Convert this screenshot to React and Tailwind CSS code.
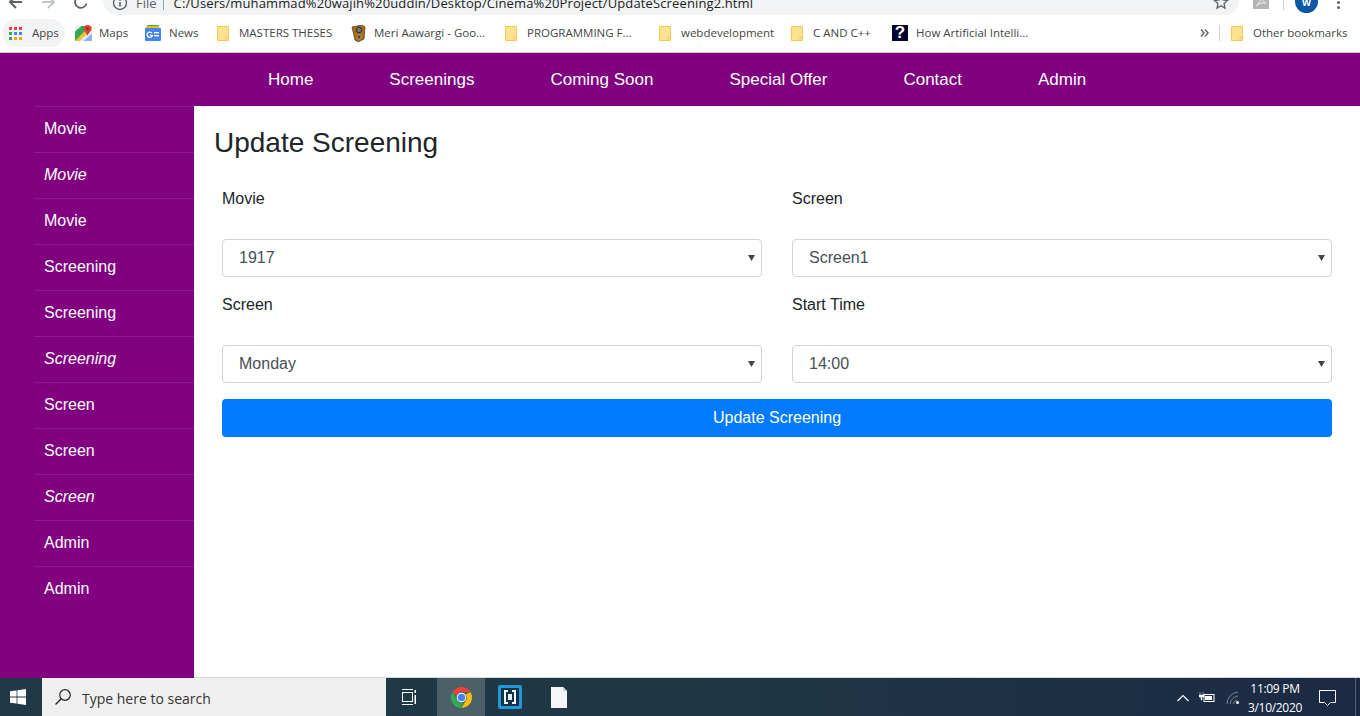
import React from "react";

const sans = "[font-family:'Liberation_Sans',Arial,sans-serif]";
const ui = "[font-family:'Open_Sans','Noto_Sans',sans-serif]";

function Folder() {
  return (
    <svg width="12" height="15" viewBox="0 0 12 15" className="shrink-0">
      <path d="M.5.5h11v14H.5z" fill="#fee28f" stroke="#f0cb5c" strokeWidth="1" />
      <path d="M9 14.5v-3h2.5" fill="none" stroke="#f0cb5c" strokeWidth="1" />
    </svg>
  );
}

function Bm({ icon, label, w }) {
  return (
    <div className={`flex items-center shrink-0 ${w}`}>
      {icon}
      <span className={`${ui} text-[11.5px] text-[#444] whitespace-nowrap`}>{label}</span>
    </div>
  );
}

function AppsIcon() {
  const c = ["#ea4335", "#ea4335", "#ea4335", "#34a853", "#4285f4", "#4285f4", "#34a853", "#fba704", "#fba704"];
  return (
    <div className="grid grid-cols-3 gap-[2px] w-[13px] h-[13px] shrink-0">
      {c.map((x, i) => (
        <span key={i} className="w-[3px] h-[3px]" style={{ background: x }} />
      ))}
    </div>
  );
}

function MapsIcon() {
  return (
    <svg width="17" height="17" viewBox="0 0 16 16" className="shrink-0">
      <path d="M0 1h16v14H0z" fill="#34a853" />
      <path d="M0 15 14 1h2v3L4 15z" fill="#fbc02d" />
      <path d="M4 15 16 4v11z" fill="#e8eaed" />
      <path d="M8 15l8-7v7z" fill="#8ab4f8" />
      <path d="M0 1h6L0 6z" fill="#e8f0fe" />
      <path d="M11.8 0a3.6 3.6 0 0 1 3.6 3.6c0 2.3-2.4 3.6-3.6 6.6-1.2-3-3.6-4.3-3.6-6.6A3.6 3.6 0 0 1 11.8 0z" fill="#db4437" />
      <circle cx="11.8" cy="3.6" r="1.2" fill="#8c2319" />
    </svg>
  );
}

function NewsIcon() {
  return (
    <svg width="16" height="16" viewBox="0 0 16 16" className="shrink-0">
      <rect x="2" y="0" width="12" height="6" rx="1" fill="#34a853" />
      <rect x="1" y="1" width="13" height="5" fill="#fbbc04" />
      <rect x="0" y="3" width="16" height="13" rx="1" fill="#4285f4" />
      <rect x="9" y="7" width="5" height="1.4" fill="#fff" />
      <rect x="9" y="10" width="5" height="1.4" fill="#fff" />
      <path d="M7 8.2A2.7 2.7 0 1 0 7.4 10.4H5" fill="none" stroke="#fff" strokeWidth="1.3" />
    </svg>
  );
}

function SpeakerIcon() {
  return (
    <svg width="15" height="17" viewBox="0 0 15 17" className="shrink-0">
      <path d="M1 2 11 0l3 2-1 12-6 3-3-2z" fill="#a8701c" stroke="#4a3010" strokeWidth="0.7" />
      <circle cx="8" cy="5" r="2.8" fill="#777" stroke="#222" strokeWidth="0.9" />
      <circle cx="8" cy="12" r="2" fill="#444" stroke="#d2a860" strokeWidth="0.7" />
    </svg>
  );
}

function QIcon() {
  return (
    <div className={`${sans} w-[16px] h-[16px] bg-[#04042c] shrink-0 overflow-hidden text-white text-[17px] font-bold leading-[15px] text-center`}>
      ?
    </div>
  );
}

function TopBar() {
  return (
    <div className="h-[15px] flex items-end bg-white overflow-hidden shrink-0">
      <div className="relative w-full h-[15px] flex items-end">
        <svg width="16" height="16" viewBox="0 0 16 16" className="ml-[8px] mb-[5px] shrink-0">
          <path d="M14 8H3M8 2 2 8l6 6" fill="none" stroke="#5f6368" strokeWidth="2" />
        </svg>
        <svg width="16" height="16" viewBox="0 0 16 16" className="ml-[16px] mb-[5px] shrink-0">
          <path d="M2 8h11M8 2l6 6-6 6" fill="none" stroke="#c4c7ca" strokeWidth="2" />
        </svg>
        <svg width="16" height="16" viewBox="0 0 16 16" className="ml-[17px] mb-[5px] shrink-0">
          <path d="M13.5 9.5A5.8 5.8 0 1 1 12 4" fill="none" stroke="#5f6368" strokeWidth="1.8" />
          <path d="M14.5 1v5h-5z" fill="#5f6368" />
        </svg>
        <div className="ml-[14px] w-[1136px] h-[30px] rounded-[15px] bg-[#f1f3f4] flex items-end pl-[9px] shrink-0">
          <div className="flex items-center h-[15px] relative">
            <svg width="16" height="16" viewBox="0 0 16 16" className="shrink-0 -mt-[10px]">
              <circle cx="8" cy="8" r="6.5" fill="none" stroke="#5f6368" strokeWidth="1.4" />
              <rect x="7.2" y="7" width="1.6" height="4.5" fill="#5f6368" />
              <rect x="7.2" y="4.2" width="1.6" height="1.6" fill="#5f6368" />
            </svg>
            <span className={`${ui} text-[13px] text-[#5f6368] ml-[8px] -mt-[10px] leading-[16px]`}>File</span>
            <span className="w-px h-[14px] bg-[#9aa0a6] ml-[6px] -mt-[10px]" />
            <span className={`${ui} text-[13px] text-[#202124] ml-[10px] -mt-[10px] leading-[16px] whitespace-nowrap tracking-[0.125px]`}>
              C:/Users/muhammad%20wajih%20uddin/Desktop/Cinema%20Project/UpdateScreening2.html
            </span>
          </div>
        </div>
        <svg width="16" height="16" viewBox="0 0 16 16" className="absolute left-[1213px] -top-[6px]">
          <path d="m8 1.8 1.9 4.2 4.6.5-3.4 3.1.9 4.5-4-2.3-4 2.3.9-4.5-3.4-3.1 4.6-.5z" fill="none" stroke="#5f6368" strokeWidth="1.3" />
        </svg>
        <svg width="16" height="16" viewBox="0 0 16 16" className="absolute left-[1253px] -top-[7px]">
          <rect width="16" height="16" fill="#b5b5b5" />
          <path d="M3 13c3-2 5-6 5-10 0 4 2 6 5 7-4-.5-7 .5-10 3z" fill="none" stroke="#eee" strokeWidth="1" />
        </svg>
        <span className="absolute left-[1283px] top-0 w-px h-[10px] bg-[#d0d0d0]" />
        <div className="absolute left-[1295px] -top-[10px] w-[23px] h-[23px] rounded-full bg-[#0b57a4] text-white text-[11px] font-bold leading-[24px] text-center">
          w
        </div>
        <div className="absolute left-[1337px] top-[1px] flex flex-col gap-[2px]">
          <span className="w-[3px] h-[3px] rounded-full bg-[#5f6368]" />
          <span className="w-[3px] h-[3px] rounded-full bg-[#5f6368]" />
        </div>
      </div>
    </div>
  );
}

function Bookmarks() {
  return (
    <div className="h-[38px] flex items-center bg-white border-b border-[#d0d0d0] shrink-0 pb-[1px]">
      <div className="flex items-center ml-[2px] w-[63px] h-[28px] rounded-[14px] bg-[#f1f3f4] pl-[7px] gap-[10px] shrink-0">
        <AppsIcon />
        <span className={`${ui} text-[11.5px] text-[#444]`}>Apps</span>
      </div>
      <Bm w="ml-[10px] w-[70px] gap-[7px]" icon={<MapsIcon />} label="Maps" />
      <Bm w="w-[71px] gap-[8px]" icon={<NewsIcon />} label="News" />
      <Bm w="ml-[1px] w-[134px] gap-[10px]" icon={<Folder />} label="MASTERS THESES" />
      <Bm w="w-[154px] gap-[8px]" icon={<SpeakerIcon />} label="Meri Aawargi - Goo..." />
      <Bm w="w-[154px] gap-[10px]" icon={<Folder />} label="PROGRAMMING F..." />
      <Bm w="w-[132px] gap-[10px]" icon={<Folder />} label="webdevelopment" />
      <Bm w="w-[101px] gap-[10px]" icon={<Folder />} label="C AND C++" />
      <Bm w="w-[308px] gap-[8px]" icon={<QIcon />} label="How Artificial Intelli..." />
      <svg width="9" height="8" viewBox="0 0 9 8" className="shrink-0 mr-[10px]">
        <path d="M1 .5 4 4 1 7.5M5 .5 8 4 5 7.5" fill="none" stroke="#666" strokeWidth="1.5" />
      </svg>
      <span className="w-px h-[16px] bg-[#d0d0d0]" />
      <Bm w="ml-[11px] gap-[10px]" icon={<Folder />} label="Other bookmarks" />
    </div>
  );
}

const navItems = ["Home", "Screenings", "Coming Soon", "Special Offer", "Contact", "Admin"];
const sideItems = [
  ["Movie", false],
  ["Movie", true],
  ["Movie", false],
  ["Screening", false],
  ["Screening", false],
  ["Screening", true],
  ["Screen", false],
  ["Screen", false],
  ["Screen", true],
  ["Admin", false],
  ["Admin", false],
];

function Field({ label, value }) {
  return (
    <div className="flex flex-col">
      <label className="h-[24px] leading-[24px] mb-[28px] text-[16px] text-[#212529]">{label}</label>
      <div className="relative">
        <select
          defaultValue={value}
          className="appearance-none w-full h-[38px] rounded-[4px] border border-[#ced4da] bg-white pl-[16px] text-[16px] text-[#495057] outline-none"
        >
          <option>{value}</option>
        </select>
        <svg width="7" height="6" viewBox="0 0 7 6" className="absolute right-[7px] top-[16px]">
          <path d="M0 0h7L3.5 6z" fill="#444" />
        </svg>
      </div>
    </div>
  );
}

function Taskbar() {
  return (
    <div className="h-[38px] flex items-stretch bg-linear-to-r from-[#1f3a46] via-[#1f3745] to-[#1b2a44] shrink-0">
      <div className="w-[42px] flex items-center pl-[10px]">
        <svg width="16" height="16" viewBox="0 0 16 16">
          <path d="M0 2.3 6.6 1.4v6.2H0zM7.4 1.3 16 0v7.6H7.4zM0 8.4h6.6v6.2L0 13.7zM7.4 8.4H16V16l-8.6-1.3z" fill="#fff" />
        </svg>
      </div>
      <div className="w-[344px] bg-[#f0f0f0] flex items-center pl-[12px]">
        <svg width="18" height="18" viewBox="0 0 18 18" className="shrink-0">
          <circle cx="11" cy="7" r="5.3" fill="none" stroke="#222" strokeWidth="1.2" />
          <path d="M7.2 10.8 1.5 16.5" stroke="#222" strokeWidth="1.4" />
        </svg>
        <span className={`${ui} text-[14px] text-[#333] ml-[10px] mt-[2px]`}>Type here to search</span>
      </div>
      <div className="w-[51px] flex items-center pl-[16px]">
        <svg width="15" height="16" viewBox="0 0 15 16">
          <path d="M0 .5h11M0 15.5h11" stroke="#fff" strokeWidth="1" />
          <rect x="0.5" y="3.5" width="10" height="9" fill="none" stroke="#fff" strokeWidth="1" />
          <rect x="12.5" y="1" width="1.5" height="3" fill="#fff" />
          <rect x="12.5" y="6" width="1.5" height="9" fill="#fff" />
        </svg>
      </div>
      <div className="w-[48px] bg-[#4c6069] flex items-center justify-center">
        <svg width="23" height="23" viewBox="0 0 48 48">
          <path d="M24 2a22 22 0 0 1 19 11H24a11 11 0 0 0-10.5 7.5L5.5 12A22 22 0 0 1 24 2z" fill="#ea4335" />
          <path d="M43 13a22 22 0 0 1-19 33l9.5-16.5A11 11 0 0 0 33 17z" fill="#fbbc04" />
          <path d="M24 46A22 22 0 0 1 5.5 12l9.5 17A11 11 0 0 0 27 35z" fill="#34a853" />
          <circle cx="24" cy="24" r="10" fill="#fff" />
          <circle cx="24" cy="24" r="8" fill="#4285f4" />
        </svg>
      </div>
      <div className="w-[50px] flex items-center justify-center">
        <svg width="24" height="24" viewBox="0 0 24 24">
          <rect width="24" height="24" rx="2" fill="#2198d8" />
          <rect x="3" y="3" width="18" height="18" fill="#10344c" />
          <path d="M10 6H7v12h3M14 6h3v12h-3" fill="none" stroke="#fff" strokeWidth="2" />
          <rect x="10" y="9" width="4" height="6" fill="#e8eef2" />
        </svg>
      </div>
      <div className="w-[47px] flex items-center justify-center">
        <svg width="16" height="21" viewBox="0 0 16 21">
          <path d="M0 0h12l4 4v17H0z" fill="#f4f6f7" />
          <path d="M12 0v4h4z" fill="#c9ced1" />
        </svg>
      </div>
      <div className="flex-1 relative">
        <svg width="12" height="8" viewBox="0 0 12 8" className="absolute left-[595px] top-[16px]">
          <path d="M.5 7 6 1.5 11.5 7" fill="none" stroke="#fff" strokeWidth="1.2" />
        </svg>
        <svg width="16" height="12" viewBox="0 0 16 12" className="absolute left-[617px] top-[14px]">
          <rect x="5" y="2.5" width="10" height="7" fill="none" stroke="#fff" />
          <rect x="6" y="4" width="7" height="4" fill="#fff" />
          <path d="M1 0v3M4 0v3M0 3h5v2H3v3H2V5H0z" fill="#fff" stroke="#fff" strokeWidth="0.5" />
        </svg>
        <svg width="14" height="14" viewBox="0 0 14 14" className="absolute left-[644px] top-[13px]">
          <path d="M1 13A12 12 0 0 1 12 1M4 13a9 9 0 0 1 8-8M7 13a6 6 0 0 1 4-4" fill="none" stroke="#7c8791" strokeWidth="1" />
          <circle cx="11.5" cy="11.5" r="1.5" fill="#fff" />
        </svg>
        <div className={`${ui} absolute left-[659px] top-[1px] w-[68px] text-center text-[12px] leading-[19px] text-white tracking-[-0.3px]`}>
          <div>11:09 PM</div>
          <div>3/10/2020</div>
        </div>
        <svg width="17" height="16" viewBox="0 0 17 16" className="absolute left-[737px] top-[12px]">
          <path d="M.5.5h16v12h-5l-3 3-3-3h-5z" fill="none" stroke="#fff" />
        </svg>
        <span className="absolute right-[4px] top-0 h-full w-px bg-[#4f6070]" />
      </div>
    </div>
  );
}

export default function App() {
  return (
    <div className={`${sans} w-[1360px] h-[716px] flex flex-col overflow-hidden bg-white`}>
      <TopBar />
      <Bookmarks />
      <nav className="h-[53px] bg-[#800080] flex items-center pl-[230px] shrink-0">
        {navItems.map((n) => (
          <a key={n} className="px-[38px] text-[17px] text-white whitespace-nowrap">
            {n}
          </a>
        ))}
      </nav>
      <div className="flex-1 flex min-h-0">
        <aside className="w-[194px] bg-[#800080] pl-[34px] shrink-0">
          {sideItems.map(([t, it], i) => (
            <div
              key={i}
              className={`h-[46px] border-t border-[#8f1a8f] pl-[10px] pb-[2px] flex items-center text-[16px] text-white ${it ? "italic" : ""}`}
            >
              {t}
            </div>
          ))}
        </aside>
        <main className="flex-1 border-b border-[#d8d8d8]">
          <h1 className="ml-[20px] mt-[20px] h-[34px] leading-[34px] text-[28px] font-normal text-[#212529]">Update Screening</h1>
          <form className="px-[28px] pt-[27px]">
            <div className="grid grid-cols-2 gap-x-[30px] gap-y-[16px]">
              <Field label="Movie" value="1917" />
              <Field label="Screen" value="Screen1" />
              <Field label="Screen" value="Monday" />
              <Field label="Start Time" value="14:00" />
            </div>
            <button type="button" className="mt-[16px] w-full h-[38px] rounded-[4px] bg-[#007bff] text-white text-[16px]">
              Update Screening
            </button>
          </form>
        </main>
      </div>
      <Taskbar />
    </div>
  );
}
